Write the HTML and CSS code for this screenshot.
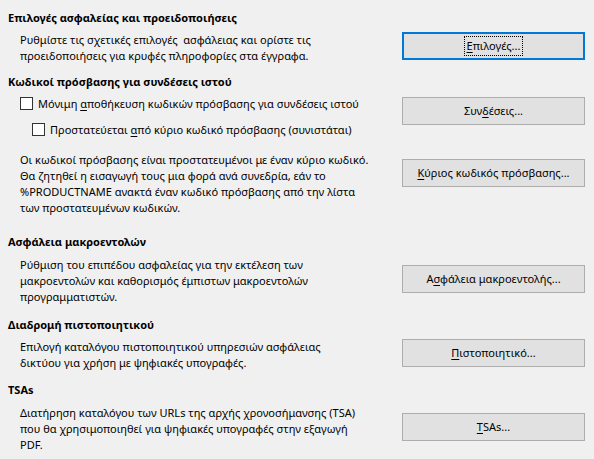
FILE: index.html
```html
<!DOCTYPE html>
<html lang="el">
<head>
<meta charset="utf-8">
<title>Ασφάλεια</title>
<link rel="stylesheet" href="styles.css">
</head>
<body>
<div class="page">
  <section class="sec s1">
    <h2 class="head">Επιλογές ασφαλείας και προειδοποιήσεις</h2>
    <div class="row">
      <p class="desc">Ρυθμίστε τις σχετικές επιλογές&nbsp; ασφάλειας και ορίστε τις<br>προειδοποιήσεις για κρυφές πληροφορίες στα έγγραφα.</p>
      <button class="btn focus"><span class="lbl"><u>Ε</u>πιλογές...</span></button>
    </div>
  </section>

  <section class="sec s2">
    <h2 class="head">Κωδικοί πρόσβασης για συνδέσεις ιστού</h2>
    <div class="row top">
      <div class="checks">
        <label class="check"><span class="box"></span><span class="ctext">Μόνιμη <u>α</u>ποθήκευση κωδικών πρόσβασης για συνδέσεις ιστού</span></label>
        <label class="check sub"><span class="box"></span><span class="ctext">Προστατεύεται <u>α</u>πό κύριο κωδικό πρόσβασης (συνιστάται)</span></label>
      </div>
      <button class="btn"><span class="lbl">Συν<u>δ</u>έσεις...</span></button>
    </div>
    <div class="row top pw">
      <p class="desc">Οι κωδικοί πρόσβασης είναι προστατευμένοι με έναν κύριο κωδικό.<br>Θα ζητηθεί η εισαγωγή τους μια φορά ανά συνεδρία, εάν το<br>%PRODUCTNAME ανακτά έναν κωδικό πρόσβασης από την λίστα<br>των προστατευμένων κωδικών.</p>
      <button class="btn b-master"><span class="lbl"><u>Κ</u>ύριος κωδικός πρόσβασης...</span></button>
    </div>
  </section>

  <section class="sec s3">
    <h2 class="head">Ασφάλεια μακροεντολών</h2>
    <div class="row">
      <p class="desc">Ρύθμιση του επιπέδου ασφαλείας για την εκτέλεση των<br>μακροεντολών και καθορισμός έμπιστων μακροεντολών<br>προγραμματιστών.</p>
      <button class="btn"><span class="lbl">Α<u>σ</u>φάλεια μακροεντολής...</span></button>
    </div>
  </section>

  <section class="sec s4">
    <h2 class="head">Διαδρομή πιστοποιητικού</h2>
    <div class="row">
      <p class="desc">Επιλογή καταλόγου πιστοποιητικού υπηρεσιών ασφάλειας<br>δικτύου για χρήση με ψηφιακές υπογραφές.</p>
      <button class="btn"><span class="lbl"><u>Π</u>ιστοποιητικό...</span></button>
    </div>
  </section>

  <section class="sec s5">
    <h2 class="head">TSAs</h2>
    <div class="row">
      <p class="desc">Διατήρηση καταλόγου των URLs της αρχής χρονοσήμανσης (TSA)<br>που θα χρησιμοποιηθεί για ψηφιακές υπογραφές στην εξαγωγή<br>PDF.</p>
      <button class="btn"><span class="lbl"><u>T</u>SAs...</span></button>
    </div>
  </section>
</div>
</body>
</html>
```

FILE: styles.css
```css
* { box-sizing: border-box; }
html, body {
  margin: 0;
  padding: 0;
  background: #f0f0f0;
}
body {
  width: 594px;
  height: 459px;
  overflow: hidden;
  font-family: "Noto Sans", "Open Sans", sans-serif;
  font-size: 11px;
  color: #000;
}
.page {
  padding: 10px 9px 0 8px;
  display: flex;
  flex-direction: column;
}
.head {
  margin: 0;
  font-size: 11px;
  font-weight: bold;
  line-height: 16px;
  height: 16px;
}
.row {
  display: grid;
  grid-template-columns: 1fr 183px;
  align-items: center;
  margin-top: 6px;
  padding-left: 12px;
}
.row.top { align-items: start; }
.desc {
  margin: 0;
  line-height: 16px;
  white-space: nowrap;
}
.btn {
  height: 28px;
  width: 183px;
  margin: 0 0 4px 0;
  padding: 0;
  background: #e1e1e1;
  border: 1px solid #adadad;
  font: inherit;
  color: #000;
  display: flex;
  align-items: center;
  justify-content: center;
}
.row.top .btn { margin: 0; }
.btn.focus {
  border: 2px solid #0078d7;
}
.btn.focus .lbl {
  outline: 1px dotted #000;
  outline-offset: 1px;
  padding: 1px 1px;
  line-height: 14px;
}
.lbl { line-height: 16px; }
u { text-decoration-thickness: 1px; text-underline-offset: 2px; }

.s2 { margin-top: 10px; }
.s2 .row.top { margin-top: 7px; }
.checks {
  display: flex;
  flex-direction: column;
  gap: 13px;
}
.check {
  display: flex;
  align-items: center;
  height: 13px;
  line-height: 13px;
  white-space: nowrap;
}
.ctext { white-space: pre; }
.check.sub { margin-left: 12px; }
.box {
  width: 13px;
  height: 13px;
  border: 1px solid #333;
  background: #fff;
  margin-right: 5px;
  flex: none;
}
.s2 .row.pw { margin-top: 16px; }
.b-master { margin-top: 7px !important; }
.s3 { margin-top: 18px; }
.s3 .row { margin-top: 7px; }
.s4 { margin-top: 12px; }
.s5 { margin-top: 11px; }
.s5 .row { margin-top: 7px; }
```
